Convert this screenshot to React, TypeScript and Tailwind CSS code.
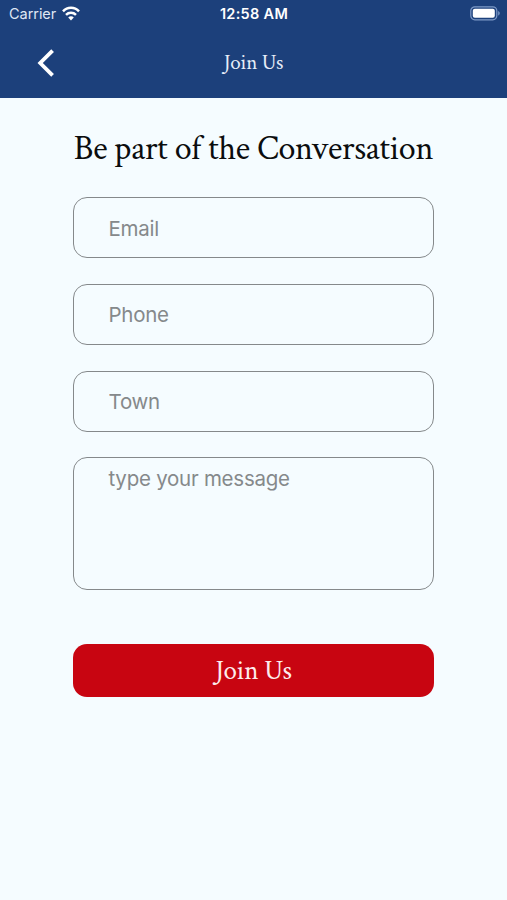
import { useState } from "react"

type FormValue = {
  email: string
  phone: string
  town: string
  message: string
}

type FieldName = "email" | "phone" | "town"

const fields: { name: FieldName; type: string; label: string }[] = [
  { name: "email", type: "email", label: "Email" },
  { name: "phone", type: "tel", label: "Phone" },
  { name: "town", type: "text", label: "Town" },
]

function createInitialForm(): FormValue {
  return { email: "", phone: "", town: "", message: "" }
}

function StatusBar() {
  return (
    <div className="grid h-[27px] grid-cols-3 items-center pr-[7px] pl-[9px] text-white">
      <div className="flex items-center gap-[6px]">
        <span className="pt-px text-[14.5px] leading-none tracking-[-0.05px] text-[#dfe7f4]">Carrier</span>
        <svg width="18" height="15" viewBox="0 0 18 15" fill="none" stroke="currentColor" strokeWidth="2.5">
          <path d="M1 5.4C5.4.6 12.6.6 17 5.4" />
          <path d="M4 8.8c2.8-2.8 7.2-2.8 10 0" />
          <path d="M9 14.4 6.2 11.4c1.6-1.4 4-1.4 5.6 0Z" fill="currentColor" stroke="none" />
        </svg>
      </div>
      <span className="-ml-px pt-[2px] text-center text-[14.5px] leading-none font-semibold tracking-[0.3px] whitespace-nowrap">
        12:58 AM
      </span>
      <svg className="justify-self-end" width="30" height="15" viewBox="0 0 30 15">
        <rect x="0.8" y="0.8" width="26" height="13" rx="4" fill="none" stroke="#7e9ac7" strokeWidth="1.2" />
        <rect x="2.8" y="2.8" width="22" height="9" rx="2" fill="#fff" />
        <path d="M28.2 5v4.6c2-.8 2-3.8 0-4.6Z" fill="#7e9ac7" />
      </svg>
    </div>
  )
}

function Header() {
  return (
    <header className="h-[98px] bg-[#1c407b]">
      <StatusBar />
      <div className="grid h-[71px] grid-cols-3 items-center">
        <button type="button" aria-label="Back" className="ml-[37px] w-fit">
          <svg width="18" height="28" viewBox="0 0 18 28" fill="none" stroke="#fff" strokeWidth="3.8">
            <path d="M15.6 1.6 3.2 14l12.4 12.4" />
          </svg>
        </button>
        <h1 className="text-center font-['Crimson_Text','Liberation_Serif',serif] text-[21px] leading-none tracking-[-0.1px] text-[#e6edf8]">
          Join Us
        </h1>
      </div>
    </header>
  )
}

export default function App() {
  const [form, setForm] = useState<FormValue>(createInitialForm())

  const handleSubmit = (e: React.FormEvent<HTMLFormElement>) => {
    e.preventDefault()
    setForm(createInitialForm())
  }

  return (
    <div className="min-h-screen bg-[#f5fcff] font-['Inter',sans-serif]">
      <Header />

      <main className="mx-auto w-[361px] pt-[31px]">
        <h2 className="flex h-10 items-center justify-center font-['Crimson_Text','Liberation_Serif',serif] text-[34px] leading-none tracking-[-0.3px] whitespace-nowrap text-[#0b0d0e]">
          Be part of the Conversation
        </h2>

        <form onSubmit={handleSubmit} className="mt-[28.4px] flex flex-col">
          {fields.map((field) => (
            <input
              key={field.name}
              type={field.type}
              value={form[field.name]}
              onChange={(e) => setForm((prev) => ({ ...prev, [field.name]: e.target.value }))}
              placeholder={field.label}
              className="mb-[25.6px] h-[61px] w-full rounded-[14px] border-[1.4px] border-[#85898b] bg-transparent px-[34.5px] pt-px text-[20.5px] tracking-[-0.25px] text-[#0b0d0e] outline-none placeholder:text-[#85898b]"
            />
          ))}

          <textarea
            value={form.message}
            onChange={(e) => setForm((prev) => ({ ...prev, message: e.target.value }))}
            placeholder="type your message"
            className="h-[133px] w-full resize-none rounded-[14px] border-[1.4px] border-[#85898b] bg-transparent px-[34.5px] pt-[8px] text-[20.5px] leading-[26px] tracking-[-0.25px] text-[#0b0d0e] outline-none placeholder:text-[#85898b]"
          />

          <button
            type="submit"
            className="mt-[54px] h-[53px] rounded-[14px] bg-[#c80511] font-['Crimson_Text','Liberation_Serif',serif] text-[27px] leading-none tracking-[-0.15px] text-[#fdeced]"
          >
            Join Us
          </button>
        </form>
      </main>
    </div>
  )
}
